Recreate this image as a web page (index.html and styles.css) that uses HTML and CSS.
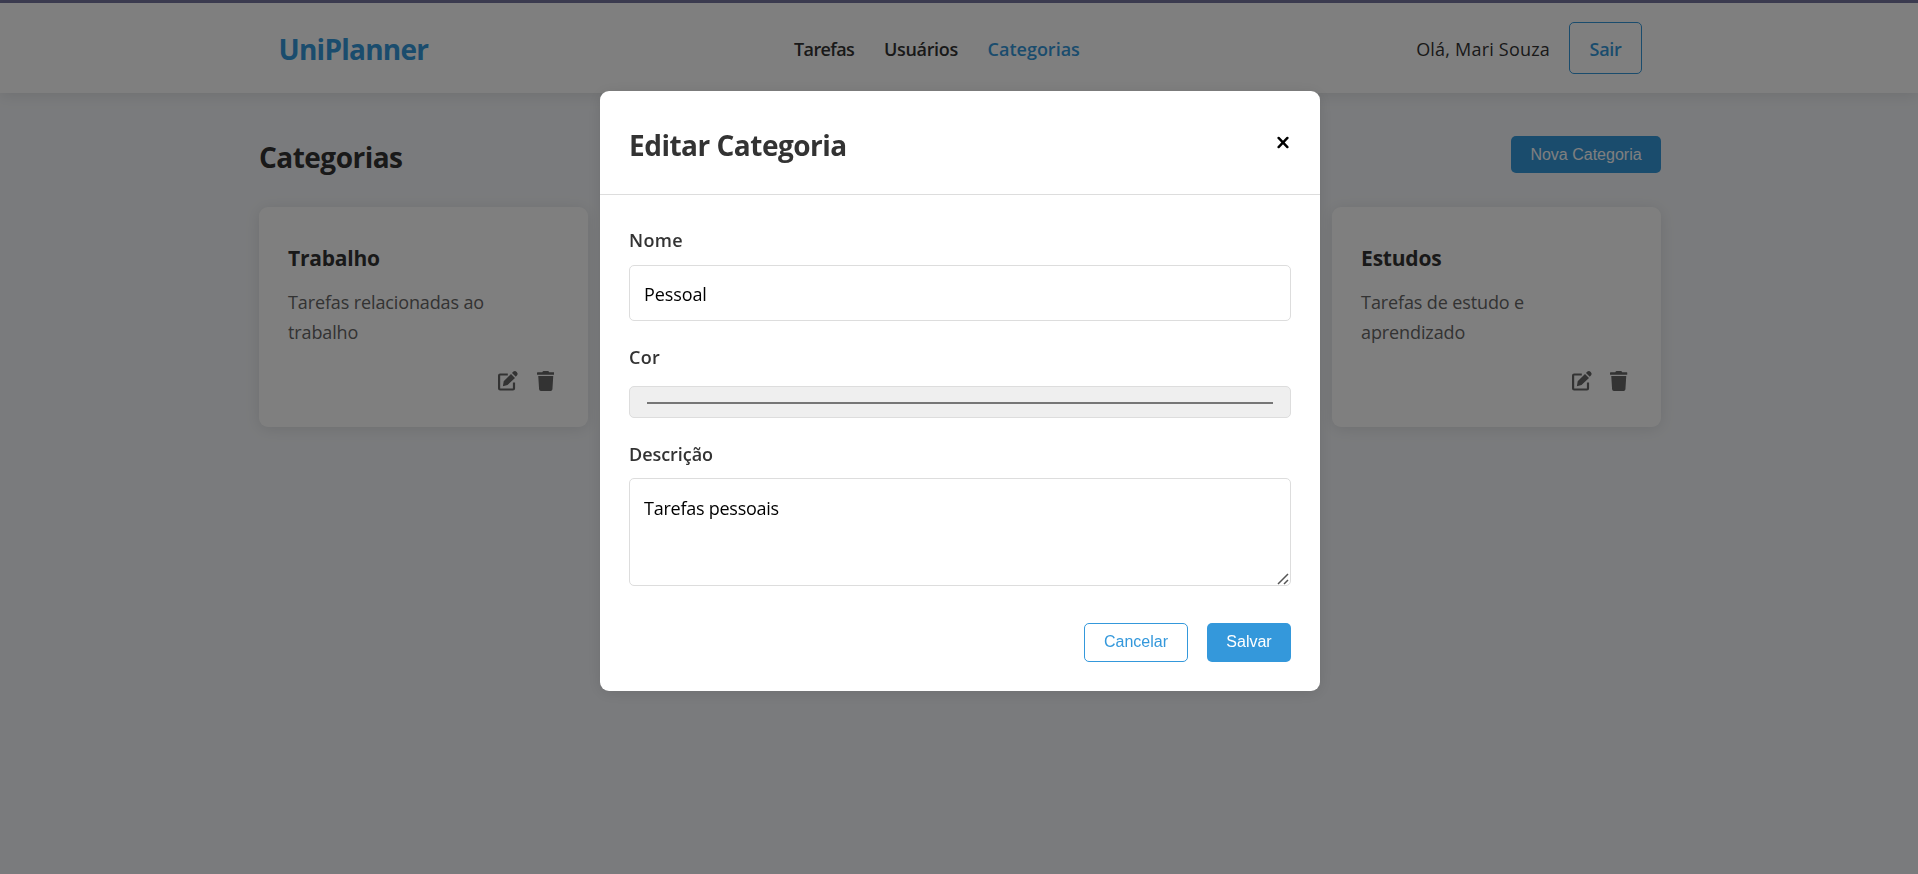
FILE: index.html
```html
<!DOCTYPE html>
<html lang="pt-BR">
<head>
<meta charset="utf-8">
<title>UniPlanner</title>
<link rel="stylesheet" href="styles.css">
</head>
<body>
<svg class="symbols" aria-hidden="true">
  <symbol id="edit" viewBox="0 0 20 20">
    <path d="M9.8 3.5H2.1Q1.1 3.5 1.1 4.5V17.5Q1.1 18.5 2.1 18.5H15Q16 18.5 16 17.5V11.5" fill="none" stroke="currentColor" stroke-width="2.2"/>
    <path d="M13 2.9L17 6.9L9.5 14.1L4.9 15.2L5.7 10.2ZM14 1.9L15.4.5Q17 -.6 18.7 .9Q20.3 2.6 19.1 4.2L17.8 5.7Z" fill="currentColor"/>
  </symbol>
  <symbol id="trash" viewBox="0 0 448 512">
    <path fill="currentColor" d="M432 32H312l-9.4-18.7A24 24 0 0 0 281.1 0H166.8a23.72 23.72 0 0 0-21.4 13.3L136 32H16A16 16 0 0 0 0 48v32a16 16 0 0 0 16 16h416a16 16 0 0 0 16-16V48a16 16 0 0 0-16-16zM53.2 467a48 48 0 0 0 47.9 45h245.8a48 48 0 0 0 47.9-45L416 128H32z"/>
  </symbol>
</svg>
<div class="stripe"></div>
<header class="header">
  <div class="header-inner">
    <a class="brand">UniPlanner</a>
    <nav class="nav">
      <a class="nav-tasks">Tarefas</a>
      <a class="nav-users">Usuários</a>
      <a class="active">Categorias</a>
    </nav>
    <div class="user"><span class="hello">Olá, Mari Souza</span><a class="logout">Sair</a></div>
  </div>
</header>
<main class="page">
  <div class="page-head"><h2>Categorias</h2><button class="btn btn-primary btn-new">Nova Categoria</button></div>
  <div class="grid">
    <article class="card"><h3>Trabalho</h3><p>Tarefas relacionadas ao trabalho</p>
      <div class="actions"><svg class="i-edit"><use href="#edit"/></svg><svg class="i-trash"><use href="#trash"/></svg></div></article>
    <article class="card"><h3>Estudos</h3><p>Tarefas de estudo e aprendizado</p>
      <div class="actions"><svg class="i-edit"><use href="#edit"/></svg><svg class="i-trash"><use href="#trash"/></svg></div></article>
  </div>
</main>
<div class="overlay">
  <section class="modal">
    <div class="modal-head">
      <h2>Editar Categoria</h2>
      <svg class="close" viewBox="0 0 12 13"><path d="M1.6 1.9L10.4 11.1M10.4 1.9L1.6 11.1" stroke="#000" stroke-width="2.4" stroke-linecap="round"/></svg>
    </div>
    <form class="form">
      <label class="l-name">Nome</label>
      <input class="field name" type="text" value="Pessoal">
      <label class="l-color">Cor</label>
      <div class="field color"><span class="swatch"></span></div>
      <label class="l-desc">Descrição</label>
      <div class="desc-wrap">
        <textarea class="field desc">Tarefas pessoais</textarea>
        <svg class="grip" viewBox="0 0 12 12"><path d="M1 11L11 1M7 11L11 7" stroke="#555" stroke-width="1.5"/></svg>
      </div>
      <div class="form-actions"><button type="button" class="btn btn-outline">Cancelar</button><button type="button" class="btn btn-primary btn-save">Salvar</button></div>
    </form>
  </section>
</div>
</body>
</html>
```
FILE: styles.css
```css
* { box-sizing: border-box; margin: 0; padding: 0; }
body {
  font-family: "Open Sans", "Noto Sans", sans-serif;
  font-size: 18px;
  line-height: 30px;
  color: #333;
  background: #f5f7fa;
  height: 874px;
  overflow: hidden;
}
.symbols { display: none; }
.stripe { height: 3px; background: #3d3d52; }

.header { height: 90px; background: #fff; box-shadow: 0 2px 15px rgba(0,0,0,.1); }
.header-inner {
  display: grid;
  grid-template-columns: 516px 1fr auto;
  align-items: center;
  width: 1364px;
  height: 90px;
  margin-left: 278px;
}
.brand { font-size: 28px; font-weight: 700; letter-spacing: -.74px; color: #3498db; padding: 2px 0 0 .5px; }
.nav { display: flex; gap: 29.7px; font-weight: 600; padding-top: 2px; }
.nav-tasks { letter-spacing: -.6px; }
.nav-users { letter-spacing: -.33px; }
.active { color: #3498db; }
.user { display: flex; align-items: center; gap: 19px; }
.hello { letter-spacing: .2px; padding-top: 2px; }
.logout {
  width: 73px;
  height: 52px;
  padding-top: 1px;
  line-height: 51px;
  text-align: center;
  font-weight: 600;
  letter-spacing: -.3px;
  color: #3498db;
  border: 1px solid #3498db;
  border-radius: 5px;
}

.page { width: 1402px; margin-left: 259px; padding-top: 43px; }
.page-head { display: flex; justify-content: space-between; align-items: center; height: 37px; margin-bottom: 34px; }
.page-head h2 { font-size: 28px; letter-spacing: -.52px; line-height: 38px; padding-top: 4px; }
.btn { font: 16px "Liberation Sans", Arial, sans-serif; border: 0; border-radius: 5px; }
.btn-primary { background: #3498db; color: #fff; }
.btn-new { width: 150px; height: 37px; }

.grid { display: grid; grid-template-columns: repeat(4, 1fr); gap: 28.8px; }
.card { height: 220px; padding: 29px; background: #fff; border-radius: 9px; box-shadow: 0 2px 15px rgba(0,0,0,.1); }
.card:last-child { grid-column: 4; }
.card h3 { font-size: 21px; line-height: 44px; letter-spacing: -.22px; margin-bottom: 7px; }
.card p { max-width: 225px; color: #666; letter-spacing: -.12px; }
.actions { display: flex; justify-content: flex-end; gap: 18.5px; margin: 24px 4.5px 0 0; color: #666; }
.actions svg { height: 20px; }
.i-edit { width: 20px; }
.i-trash { width: 17.5px; }

.overlay {
  position: fixed;
  inset: 3px 0 0 0;
  display: flex;
  justify-content: center;
  align-items: flex-start;
  padding: 88px 0 0 2px;
  background: rgba(0,0,0,.5);
}
.modal { width: 720px; height: 600px; background: #fff; border-radius: 9px; box-shadow: 0 2px 15px rgba(0,0,0,.1); }
.modal-head {
  display: flex;
  justify-content: space-between;
  align-items: center;
  height: 104px;
  padding: 0 31px 0 29px;
  border-bottom: 1px solid #ddd;
}
.modal-head h2 { font-size: 28px; letter-spacing: -.5px; line-height: 38px; padding-top: 4px; }
.close { width: 12px; height: 13px; }
.form { display: flex; flex-direction: column; padding: 30px 29px 0; }
.form label { font-weight: 600; line-height: 30px; }
.l-name { letter-spacing: .3px; }
.l-color { letter-spacing: .3px; margin-top: 21px; }
.l-desc { letter-spacing: -.05px; margin-top: 21px; }
.field {
  display: block;
  width: 662px;
  color: #000;
  font-family: inherit;
  font-size: 18px;
  border: 1px solid #ddd;
  border-radius: 5px;
  background: #fff;
}
.name { height: 56px; margin-top: 10px; padding: 2px 14px 0; letter-spacing: -.1px; }
.color { height: 32px; margin-top: 14px; padding: 15px 17px 0; background: #efefef; }
.swatch { display: block; height: 2px; background: #767676; }
.desc-wrap { position: relative; margin-top: 9px; }
.desc { height: 108px; padding: 14px; line-height: 30px; letter-spacing: -.25px; resize: none; }
.grip { position: absolute; right: 2px; bottom: 1px; width: 12px; height: 12px; }
.form-actions { display: flex; justify-content: flex-end; gap: 19px; margin-top: 37px; }
.form-actions .btn { height: 39px; padding-bottom: 2px; }
.btn-outline { width: 104px; background: #fff; color: #3498db; border: 1px solid #3498db; }
.btn-save { width: 84px; }
```
